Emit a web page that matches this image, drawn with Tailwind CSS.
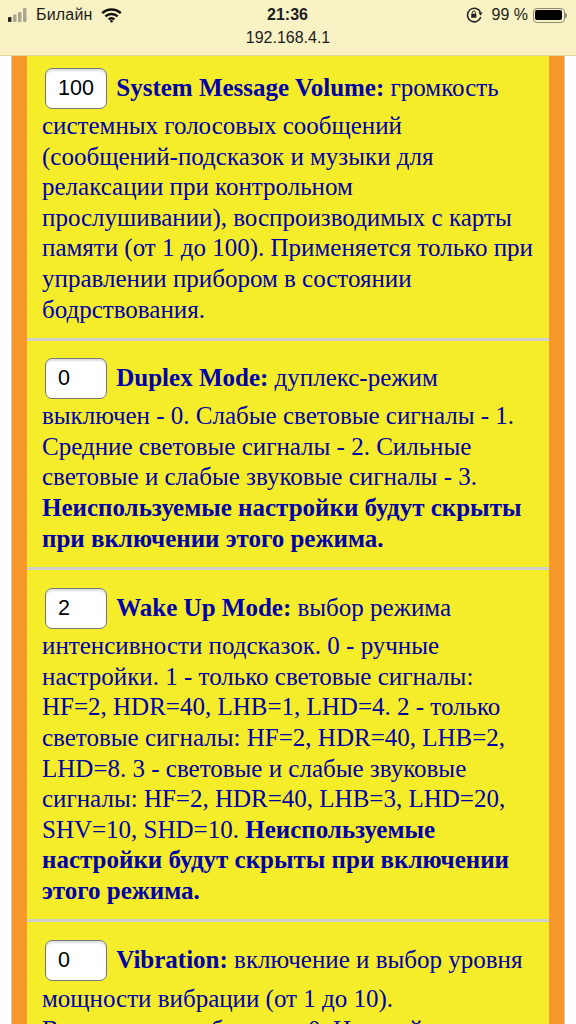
<!DOCTYPE html>
<html lang="ru">
<head>
<meta charset="utf-8">
<title>Settings</title>
<script src="https://cdn.jsdelivr.net/npm/@tailwindcss/browser@4"></script>
</head>
<body class="bg-white overflow-hidden">
<div class="w-[576px] h-[1024px] overflow-hidden flex flex-col">
  <!-- status bar -->
  <div class="h-[56px] shrink-0 bg-[#f8f2c4] border-b border-[#e0d79a] relative font-['Liberation_Sans',sans-serif] text-[#1c1c1c]">
    <div class="flex items-center justify-between h-[30px] pl-[8px] pr-[9px]">
      <div class="flex items-center w-[190px]">
        <svg width="23" height="14" viewBox="0 0 23 14" class="mr-[5px]">
          <rect x="0" y="9" width="3.5" height="5" rx="1" fill="#222"/>
          <rect x="5" y="6.5" width="3.5" height="7.5" rx="1" fill="#a9a691"/>
          <rect x="10" y="4" width="3.5" height="10" rx="1" fill="#a9a691"/>
          <rect x="15" y="0" width="3.5" height="14" rx="1" fill="#a9a691"/>
        </svg>
        <span class="text-[16px] tracking-[0.2px]">Билайн</span>
        <svg width="21" height="15" viewBox="0 0 21 15" class="ml-[8px]" fill="none" stroke="#111" stroke-width="2.4">
          <path d="M1.2 5.2a13.5 13.5 0 0 1 18.6 0"/>
          <path d="M4.4 8.4a9 9 0 0 1 12.2 0"/>
          <path d="M7.6 11.4a4.4 4.4 0 0 1 5.8 0"/>
          <circle cx="10.5" cy="13.3" r="1.3" fill="#111" stroke="none"/>
        </svg>
      </div>
      <span class="text-[16px] font-bold">21:36</span>
      <div class="flex items-center justify-end w-[190px]">
        <svg width="17" height="16" viewBox="0 0 17 16" class="mr-[9px]" fill="none" stroke="#222" stroke-width="1.5">
          <path d="M14.6 5.5A6.8 6.8 0 1 0 14.8 10"/>
          <path d="M12.2 5.6h4.4L14.6 8.6z" fill="#222" stroke="none"/>
          <rect x="5.2" y="6.8" width="5.2" height="4" rx="0.6" fill="#222" stroke="none"/>
          <path d="M6.2 6.8V5.6a1.6 1.6 0 0 1 3.2 0v1.2" stroke-width="1"/>
        </svg>
        <span class="text-[16px] mr-[5px]">99 %</span>
        <div class="w-[32px] h-[15px] rounded-[4px] border border-[#8d8a78] p-[1.5px]">
          <div class="w-full h-full bg-black rounded-[2px]"></div>
        </div>
        <div class="w-[2px] h-[5px] bg-[#8d8a78] rounded-r-sm"></div>
      </div>
    </div>
    <div class="text-center text-[16px] leading-[14px] mt-[1px]">192.168.4.1</div>
  </div>

  <!-- page -->
  <div class="flex-1 ml-[11px] mr-[11px] border-x border-[#c8c8c8] bg-[#f7982a] px-[15px] overflow-hidden">
    <div class="font-['Liberation_Serif',serif] text-[25px] leading-[30.6px] text-[#0000a8]">
      <div class="bg-[#f5ec2a] pl-[15px] pr-[12px] pt-[12px] pb-[13px] border-b-[3px] border-[#cfcfcf]">
        <input value="100" class="w-[62px] h-[41px] mr-[3px] ml-[3px] mb-[2px] align-[1px] bg-white border-[1.5px] border-[#777] rounded-[7px] pl-[12px] text-[21.5px] text-black font-['Liberation_Sans',sans-serif] shadow-[inset_0_2px_2px_#ddd]">
        <b>System Message Volume:</b> громкость системных голосовых сообщений (сообщений-подсказок и музыки для релаксации при контрольном прослушивании), воспроизводимых с карты памяти (от 1 до 100). Применяется только при управлении прибором в состоянии бодрствования.
      </div>
      <div class="bg-[#f5ec2a] pl-[15px] pr-[12px] pt-[17px] pb-[13px] border-b-[3px] border-[#cfcfcf]">
        <input value="0" class="w-[62px] h-[41px] mr-[3px] ml-[3px] mb-[2px] align-[1px] bg-white border-[1.5px] border-[#777] rounded-[7px] pl-[12px] text-[21.5px] text-black font-['Liberation_Sans',sans-serif] shadow-[inset_0_2px_2px_#ddd]">
        <b>Duplex Mode:</b> дуплекс-режим выключен - 0. Слабые световые сигналы - 1. Средние световые сигналы - 2. Сильные световые и слабые звуковые сигналы - 3. <b>Неиспользуемые настройки будут скрыты при включении этого режима.</b>
      </div>
      <div class="bg-[#f5ec2a] pl-[15px] pr-[12px] pt-[18px] pb-[13px] border-b-[3px] border-[#cfcfcf]">
        <input value="2" class="w-[62px] h-[41px] mr-[3px] ml-[3px] mb-[2px] align-[1px] bg-white border-[1.5px] border-[#777] rounded-[7px] pl-[12px] text-[21.5px] text-black font-['Liberation_Sans',sans-serif] shadow-[inset_0_2px_2px_#ddd]">
        <b>Wake Up Mode:</b> выбор режима интенсивности подсказок. 0 - ручные настройки. 1 - только световые сигналы: HF=2, HDR=40, LHB=1, LHD=4. 2 - только световые сигналы: HF=2, HDR=40, LHB=2, LHD=8. 3 - световые и слабые звуковые сигналы: HF=2, HDR=40, LHB=3, LHD=20, SHV=10, SHD=10. <b>Неиспользуемые настройки будут скрыты при включении этого режима.</b>
      </div>
      <div class="bg-[#f5ec2a] pl-[15px] pr-[12px] pt-[18px] pb-[13px]">
        <input value="0" class="w-[62px] h-[41px] mr-[3px] ml-[3px] mb-[3px] align-[1px] bg-white border-[1.5px] border-[#777] rounded-[7px] pl-[12px] text-[21.5px] text-black font-['Liberation_Sans',sans-serif] shadow-[inset_0_2px_2px_#ddd]">
        <b>Vibration:</b> включение и выбор уровня мощности вибрации (от 1 до 10).<br>Выключение вибрации - 0. Настройка применяется сразу.
      </div>
    </div>
  </div>
</div>
</body>
</html>
